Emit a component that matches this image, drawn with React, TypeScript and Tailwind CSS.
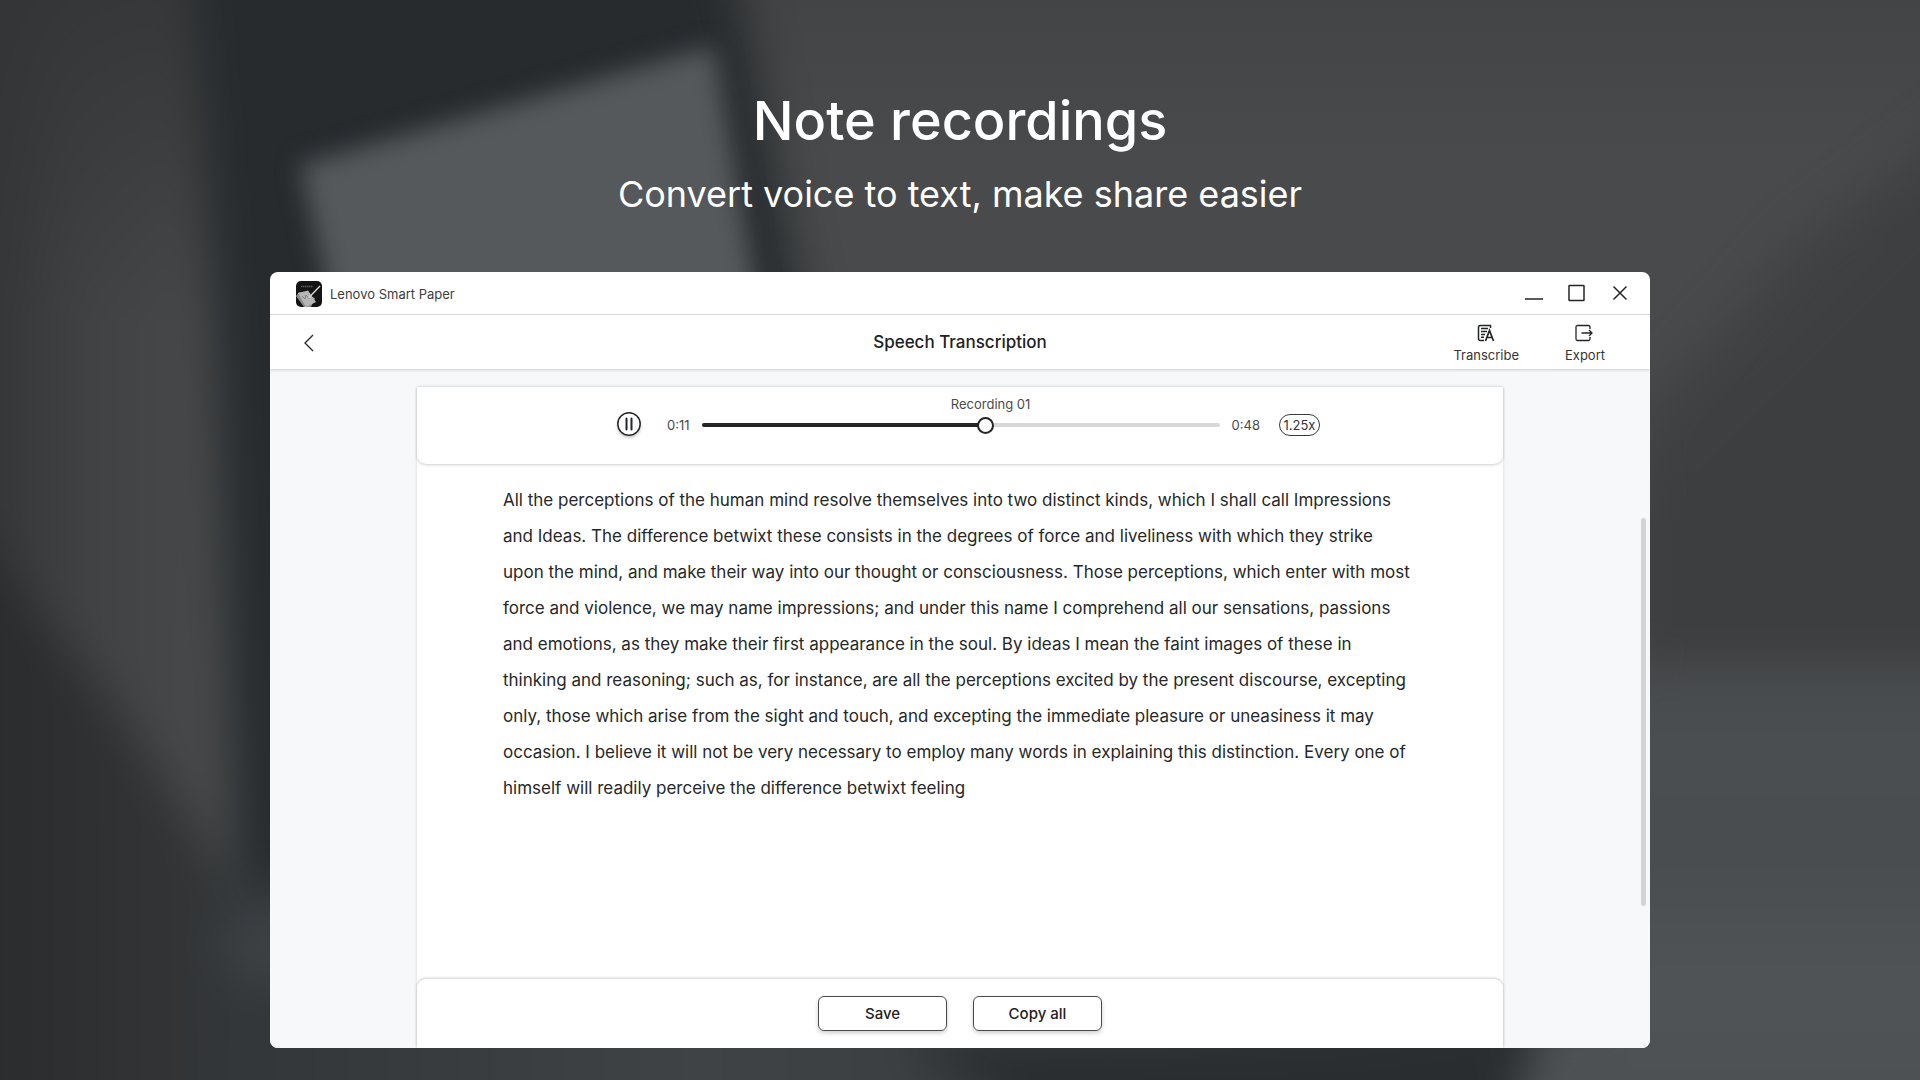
import { useState } from 'react';

const TRANSCRIPT =
  'All the perceptions of the human mind resolve themselves into two distinct kinds, which I shall call Impressions and Ideas. The difference betwixt these consists in the degrees of force and liveliness with which they strike upon the mind, and make their way into our thought or consciousness. Those perceptions, which enter with most force and violence, we may name impressions; and under this name I comprehend all our sensations, passions and emotions, as they make their first appearance in the soul. By ideas I mean the faint images of these in thinking and reasoning; such as, for instance, are all the perceptions excited by the present discourse, excepting only, those which arise from the sight and touch, and excepting the immediate pleasure or uneasiness it may occasion. I believe it will not be very necessary to employ many words in explaining this distinction. Every one of himself will readily perceive the difference betwixt feeling';

function Backdrop() {
  return (
    <svg
      className="absolute inset-0 -z-10 h-full w-full"
      viewBox="0 0 1920 1080"
      preserveAspectRatio="none"
      aria-hidden="true"
    >
      <defs>
        <linearGradient id="left" gradientUnits="userSpaceOnUse" x1="0" y1="0" x2="240" y2="0">
          <stop offset="0" stopColor="#353637" />
          <stop offset="0.3" stopColor="#404142" />
          <stop offset="1" stopColor="#484a4b" />
        </linearGradient>
        <linearGradient id="leftTop" gradientUnits="userSpaceOnUse" x1="0" y1="0" x2="0" y2="320">
          <stop offset="0" stopColor="#333435" stopOpacity="0.8" />
          <stop offset="1" stopColor="#333435" stopOpacity="0" />
        </linearGradient>
        <linearGradient id="corner" gradientUnits="userSpaceOnUse" x1="0" y1="0" x2="260" y2="0">
          <stop offset="0" stopColor="#2b2c2e" />
          <stop offset="1" stopColor="#35383a" />
        </linearGradient>
        <linearGradient id="right" x1="0" y1="0" x2="0" y2="1">
          <stop offset="0" stopColor="#434445" />
          <stop offset="0.15" stopColor="#484a4b" />
          <stop offset="0.3" stopColor="#484a4b" />
          <stop offset="1" stopColor="#3c3d3f" />
        </linearGradient>
        <linearGradient id="shade" gradientUnits="userSpaceOnUse" x1="1740" y1="200" x2="1860" y2="320">
          <stop offset="0" stopColor="#444647" />
          <stop offset="1" stopColor="#3d3e3f" />
        </linearGradient>
        <linearGradient id="desk" x1="0" y1="0" x2="0" y2="1">
          <stop offset="0" stopColor="#484b4e" />
          <stop offset="0.2" stopColor="#4c4f52" />
          <stop offset="0.35" stopColor="#494c4f" />
          <stop offset="0.65" stopColor="#515457" />
          <stop offset="1" stopColor="#4c4f52" />
        </linearGradient>
        <linearGradient id="floor" gradientUnits="userSpaceOnUse" x1="260" y1="0" x2="1500" y2="0">
          <stop offset="0" stopColor="#33373a" />
          <stop offset="0.35" stopColor="#404346" />
          <stop offset="0.65" stopColor="#3a3d3f" />
          <stop offset="1" stopColor="#2b2e30" />
        </linearGradient>
        <filter id="soft" x="-20%" y="-20%" width="140%" height="140%" colorInterpolationFilters="sRGB">
          <feGaussianBlur stdDeviation="22" />
        </filter>
        <filter id="edge" x="-20%" y="-20%" width="140%" height="140%" colorInterpolationFilters="sRGB">
          <feGaussianBlur stdDeviation="12" />
        </filter>
      </defs>
      <rect width="1920" height="1080" fill="url(#right)" />
      <g filter="url(#soft)">
        <path d="M-80-80H240V1160H-80Z" fill="url(#left)" />
        <path d="M-80-80H240V320H-80Z" fill="url(#leftTop)" />
        <path d="M-80 440L0 560L110 700L205 840L240 900V1160H-80Z" fill="url(#corner)" />
        <path d="M190-80H720L745 20L800 300V885H240L215 300Z" fill="#272b2e" />
        <path d="M240 890H1540V1160H210Z" fill="url(#floor)" />
        <ellipse cx="265" cy="945" rx="45" ry="40" fill="#3d4144" />
        <path d="M900 1042H1550L1500 1160H1100Z" fill="#2a2d2f" />
        <path d="M2000 90L1800 240L1640 420V680H2000Z" fill="url(#shade)" />
        <path d="M1600 665H2000V1160H1500L1540 1020H1600Z" fill="url(#desk)" />
      </g>
      <path d="M300 165L714 46L765 340H340Z" fill="#55595b" filter="url(#edge)" />
    </svg>
  );
}

function AppLogo() {
  return (
    <svg className="size-[26px]" viewBox="0 0 26 26" aria-hidden="true">
      <clipPath id="logo-clip">
        <rect width="26" height="26" rx="5" />
      </clipPath>
      <g clipPath="url(#logo-clip)">
        <rect width="26" height="26" fill="#141414" />
        <path d="M5 5.500h12" stroke="#5c5c5c" strokeWidth="1.500" strokeDasharray="1.500 .5" />
        <path d="M0 15L3 11L19 17L15 26H8Z" fill="#8d8d8d" />
        <path d="M2 12L12 9.500L20 21L10 26Z" fill="#b5b5b5" />
        <path d="M6 15l3 3 1-4 3 4 1-3" stroke="#777" strokeWidth=".8" fill="none" />
        <path d="M24 5L12.500 17" stroke="#d6d6d6" strokeWidth="1.400" />
      </g>
    </svg>
  );
}

function TitleBar() {
  return (
    <div className="flex h-[43px] items-center justify-between border-b border-[#dfe0e1] pr-5 pl-[26px]">
      <div className="flex items-center gap-2 pt-px">
        <AppLogo />
        <span className="pt-0.5 text-[13px] text-[#3c3d3e]">Lenovo Smart Paper</span>
      </div>
      <div className="flex items-center gap-[23px]">
        <button type="button" aria-label="Minimize">
          <svg className="size-5" viewBox="0 0 20 20" fill="none" stroke="#232526" strokeWidth="1.500">
            <path d="M1 16h18" />
          </svg>
        </button>
        <button type="button" aria-label="Maximize">
          <svg className="size-5" viewBox="0 0 20 20" fill="none" stroke="#232526" strokeWidth="1.500">
            <rect x="2" y="2.500" width="15" height="15" rx="0.500" />
          </svg>
        </button>
        <button type="button" aria-label="Close">
          <svg className="size-5" viewBox="0 0 20 20" fill="none" stroke="#232526" strokeWidth="1.500">
            <path d="M3.500 3.500l13 13M16.500 3.500l-13 13" />
          </svg>
        </button>
      </div>
    </div>
  );
}

function Header() {
  return (
    <header className="relative z-10 grid h-[54px] grid-cols-[1fr_auto_1fr] items-center bg-white pt-px shadow-[0_1px_3px_rgba(0,0,0,0.18)]">
      <button type="button" aria-label="Back" className="ml-7 justify-self-start">
        <svg className="size-5" viewBox="0 0 20 20" fill="none" stroke="#232526" strokeWidth="1.300">
          <path d="M15 2L7 10l8 8" />
        </svg>
      </button>
      <h2 className="text-[17px] font-medium text-[#1f2122]">Speech Transcription</h2>
      <div className="mr-[45px] flex justify-self-end gap-[46px]">
        <button type="button" className="flex flex-col items-center gap-1">
          <svg className="size-5" viewBox="0 0 20 20" fill="none" stroke="#232526" strokeWidth="1.500">
            <path d="M14.500 5V2.500H4.500Q2.500 2.500 2.500 4.500V15.500Q2.500 17.500 4.500 17.500H8" />
            <path d="M5 5.500h7M5 8.500h6M5 11.500h4M5 14.300h3" />
            <path d="M9.500 18L13.500 7.500L17.500 18M10.800 14.500h5.400" strokeWidth="1.700" />
          </svg>
          <span className="text-[13px] leading-4 text-[#343536]">Transcribe</span>
        </button>
        <button type="button" className="flex flex-col items-center gap-1">
          <svg className="size-5" viewBox="0 0 20 20" fill="none" stroke="#232526" strokeWidth="1.300">
            <path d="M15 6V4Q15 2.500 13.500 2.500H2.500Q1 2.500 1 4V16Q1 17.500 2.500 17.500H13.500Q15 17.500 15 16V14" />
            <path d="M6.500 10h10.500M14 7l3 3-3 3" />
          </svg>
          <span className="text-[13px] leading-4 text-[#343536]">Export</span>
        </button>
      </div>
    </header>
  );
}

function Player() {
  const [position, setPosition] = useState(55);

  return (
    <section className="relative flex justify-center rounded-b-[9px] bg-white pt-2 pb-[27px] pl-[17px] shadow-[0_1px_3px_rgba(0,0,0,0.2)]">
      <div className="flex items-end">
        <button type="button" aria-label="Pause" className="mr-[26px] mb-px rounded-full shadow-[0_2px_3px_rgba(0,0,0,0.2)]">
          <svg className="size-6" viewBox="0 0 24 24" fill="none" stroke="#232526">
            <circle cx="12" cy="12" r="11.200" strokeWidth="1.500" />
            <path d="M9.500 6.500v11M14.500 6.500v11" strokeWidth="2" strokeLinecap="round" />
          </svg>
        </button>
        <span className="mr-3 text-[13px] leading-6 text-[#4a4b4c]">0:11</span>
        <div className="flex w-[518px] flex-col items-center">
          <label htmlFor="seek" className="pl-[60px] text-[13px] leading-[18px] text-[#4a4b4c]">
            Recording 01
          </label>
          <div className="relative flex h-6 w-full items-center">
            <div className="h-1 w-full overflow-hidden rounded-full bg-[#d8d8d9]">
              <div className="h-full bg-[#232526]" style={{ width: `${position}%` }} />
            </div>
            <input
              id="seek"
              type="range"
              min={0}
              max={100}
              value={position}
              onChange={(e) => setPosition(Number(e.target.value))}
              className="absolute inset-0 h-full w-full appearance-none bg-transparent [&::-webkit-slider-thumb]:size-[17px] [&::-webkit-slider-thumb]:appearance-none [&::-webkit-slider-thumb]:rounded-full [&::-webkit-slider-thumb]:border-2 [&::-webkit-slider-thumb]:border-[#232526] [&::-webkit-slider-thumb]:bg-white"
            />
          </div>
        </div>
        <span className="ml-3 text-[13px] leading-6 text-[#4a4b4c]">0:48</span>
        <button
          type="button"
          className="mb-px ml-[19px] h-[22px] w-[41px] rounded-[11px] border border-[#3a3b3c] text-[13px] leading-5 text-[#343536]"
        >
          1.25x
        </button>
      </div>
    </section>
  );
}

function Actions() {
  return (
    <footer className="relative flex justify-center gap-[26px] rounded-t-[9px] bg-white pt-[17px] pb-[17px] shadow-[0_-1px_3px_rgba(0,0,0,0.2)]">
      {['Save', 'Copy all'].map((label) => (
        <button
          key={label}
          type="button"
          className="h-[35px] w-[129px] rounded-md border border-[#4a4b4c] pt-px text-[15px] font-medium text-[#1f2122] shadow-[0_2px_4px_rgba(0,0,0,0.2)]"
        >
          {label}
        </button>
      ))}
    </footer>
  );
}

export default function App() {
  return (
    <main className="relative isolate flex min-h-screen flex-col items-center overflow-hidden px-[270px] pt-[86px] pb-8 font-['Inter',sans-serif]">
      <Backdrop />
      <h1 className="text-[54px] leading-[70px] font-medium text-white">Note recordings</h1>
      <p className="mt-[14px] mb-[54px] text-[36px] leading-[48px] text-white">
        Convert voice to text, make share easier
      </p>

      <div className="flex w-full grow flex-col overflow-hidden rounded-lg bg-white">
        <TitleBar />
        <Header />
        <div className="relative flex grow justify-center bg-[#f6f8fa] px-[147px] pt-[18px]">
          <div className="flex w-full flex-col bg-white shadow-[0_0_3px_rgba(0,0,0,0.15)]">
            <Player />
            <p className="grow px-[86px] pt-[18px] text-[17px] leading-9 text-[#262829]">{TRANSCRIPT}</p>
            <Actions />
          </div>
          <div className="absolute top-[149px] right-1 h-[388px] w-[5px] rounded-full bg-[#d2d3d4]" />
        </div>
      </div>
    </main>
  );
}
